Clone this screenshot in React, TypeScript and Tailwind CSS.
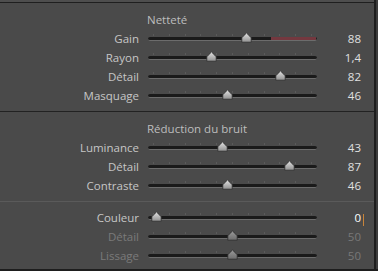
const TRACK_W = 169

type Row = {
  label: string
  value: string
  pct: number
  dim?: boolean
  focus?: boolean
  red?: boolean
}

function Thumb({ dim }: { dim?: boolean }) {
  return (
    <svg width="11" height="11" viewBox="0 0 11 11" className="block">
      <defs>
        <linearGradient id={dim ? "thumbDim" : "thumb"} x1="0" y1="0" x2="0" y2="1">
          <stop offset="0" stopColor={dim ? "#9c9c9c" : "#e6e6e6"} />
          <stop offset="1" stopColor={dim ? "#6c6c6c" : "#909090"} />
        </linearGradient>
      </defs>
      <path
        d="M5.5 0.6 Q7 3.2 10.2 5.6 L10.2 10.2 L0.8 10.2 L0.8 5.6 Q4 3.2 5.5 0.6 Z"
        fill={`url(#${dim ? "thumbDim" : "thumb"})`}
        stroke="#2c2c2c"
        strokeWidth="0.8"
      />
    </svg>
  )
}

function Slider({ row }: { row: Row }) {
  const ticks = Array.from({ length: 11 }, (_, i) => i)
  return (
    <div className="relative h-[19px] w-[169px] shrink-0">
      {ticks.map((i) => (
        <div
          key={i}
          className="absolute top-[5px] h-[2px] w-px bg-[#5a5a5a]"
          style={{ left: 5 + (i * (TRACK_W - 11)) / 10 }}
        />
      ))}
      {/* track */}
      <div className="absolute left-0 right-0 top-[8px] h-[4px] rounded-full border-b border-[#6c6c6c] bg-[#1a1a1a]" />
      {row.red && (
        <div className="absolute right-[1px] top-[8px] h-[3px] w-[45px] bg-[#74383f]" />
      )}
      <div
        className="absolute top-[3px]"
        style={{ left: Math.round((row.pct * (TRACK_W - 11)) / 100) }}
      >
        <Thumb dim={row.dim} />
      </div>
    </div>
  )
}

function SliderRow({ row }: { row: Row }) {
  return (
    <div className="flex h-[19px] items-center">
      <div
        className={`w-[140px] shrink-0 pr-[1px] text-right ${row.dim ? "text-[#7a7a7a]" : "text-[#c6c6c6]"}`}
      >
        {row.label}
      </div>
      <div className="ml-[8px]">
        <Slider row={row} />
      </div>
      <div
        className={`relative w-[44px] shrink-0 text-right ${
          row.dim ? "text-[#787878]" : row.focus ? "text-white" : "text-[#e0e0e0]"
        }`}
      >
        {row.value}
        {row.focus && (
          <span className="absolute right-[-3px] top-[2px] h-[12px] w-px bg-[#c8843a]" />
        )}
      </div>
    </div>
  )
}

function Section({
  title,
  rows,
  className,
}: {
  title?: string
  rows: Row[]
  className: string
}) {
  return (
    <div className={className}>
      {title && (
        <div className="flex h-[19px] items-center pl-[147px] text-[#bdbdbd]">{title}</div>
      )}
      {rows.map((r) => (
        <SliderRow key={r.label + r.value} row={r} />
      ))}
    </div>
  )
}

export default function App() {
  const sharpen: Row[] = [
    { label: "Gain", value: "88", pct: 58.7, red: true },
    { label: "Rayon", value: "1,4", pct: 37 },
    { label: "Détail", value: "82", pct: 80.5 },
    { label: "Masquage", value: "46", pct: 47 },
  ]
  const noise: Row[] = [
    { label: "Luminance", value: "43", pct: 43.5 },
    { label: "Détail", value: "87", pct: 86 },
    { label: "Contraste", value: "46", pct: 47 },
  ]
  const color: Row[] = [
    { label: "Couleur", value: "0", pct: 2, focus: true },
    { label: "Détail", value: "50", pct: 50, dim: true },
    { label: "Lissage", value: "50", pct: 50, dim: true },
  ]

  return (
    <div
      className="h-[271px] w-[378px] overflow-hidden bg-[#3c3c3c] text-[11.5px] leading-none"
      style={{ fontFamily: '"Open Sans", "Noto Sans", sans-serif' }}
    >
      <div className="flex h-[269px] w-[376px] flex-col border-r-[2px] border-[#1e1e1e] bg-[#4a4a4a]">
        <div className="h-[2px] shrink-0 bg-[#4e4e4e]" />
        <div className="h-px shrink-0 bg-[#1f1f1f]" />
        <Section title="Netteté" rows={sharpen} className="pb-[6px] pt-[7px]" />
        <div className="h-px shrink-0 bg-[#222222]" />
        <Section title="Réduction du bruit" rows={noise} className="pb-[6px] pt-[7px]" />
        <div className="h-px shrink-0 bg-[#5a5a5a]" />
        <Section rows={color} className="pt-[6px]" />
      </div>
      <div className="h-[2px] w-full bg-[#1e1e1e]" />
    </div>
  )
}
